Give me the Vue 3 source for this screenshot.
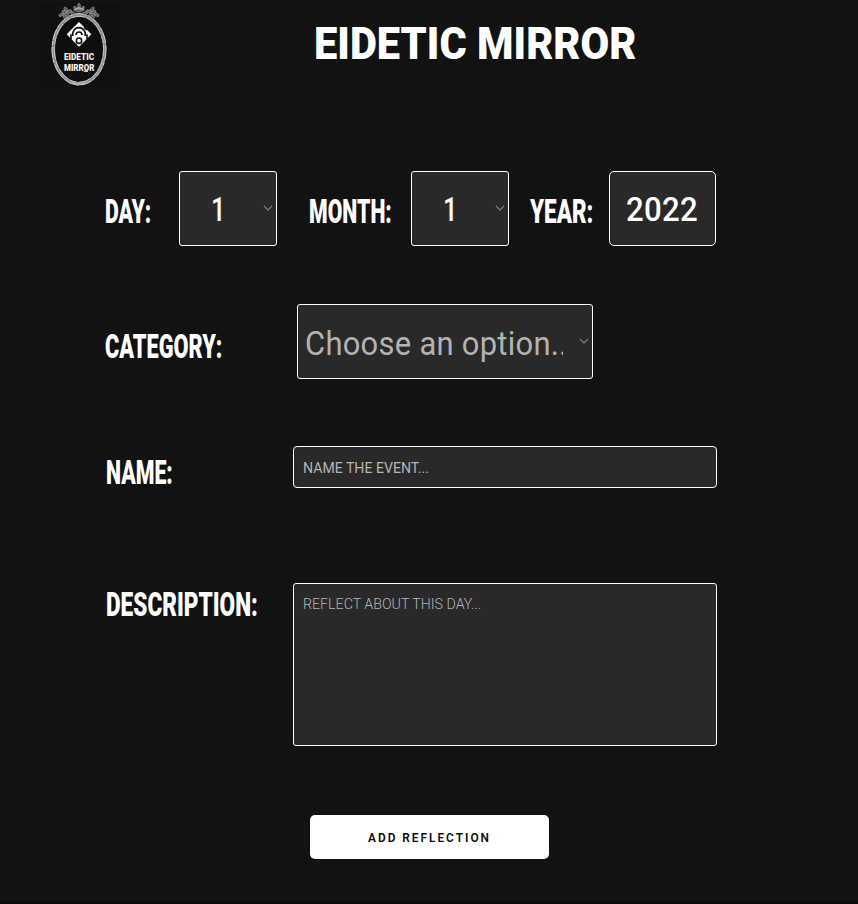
<script setup>
// Stretches a line of text horizontally to the given width.
const vFit = {
  mounted(el, { value }) {
    el.style.transform = `scaleX(${value / el.offsetWidth})`
  }
}
const petals = [
  [94, 44, -30], [104, 36, 20], [112, 44, 60], [118, 34, -15], [128, 39, 10], [137, 26, 50], [147, 18, 90],
  [157, 26, -50], [166, 39, -10], [176, 34, 15], [182, 44, -60], [190, 36, -20], [200, 44, 30],
  [104, 50, 60], [190, 50, -60], [147, 32, 0], [108, 28, 45], [186, 28, -45]
]
</script>

<template>
  <div class="page">
    <header class="header">
      <svg class="logo" viewBox="0 0 300 285" aria-label="Eidetic Mirror">
        <rect x="30" y="10" width="240" height="255" fill="#101010" />
        <ellipse cx="147" cy="148" rx="77" ry="103" fill="#0e0e0e" stroke="#8d8d8d" stroke-width="10" />
        <ellipse cx="147" cy="148" rx="81" ry="107" fill="none" stroke="#d2d2d2" stroke-width="3" stroke-dasharray="34 5 12 3" />
        <ellipse cx="147" cy="148" rx="74" ry="99" fill="none" stroke="#c4c4c4" stroke-width="3" stroke-dasharray="22 4 40 6" />
        <g fill="#555" stroke="#a5a5a5" stroke-width="2">
          <ellipse v-for="(p, i) in petals" :key="i" :cx="p[0]" :cy="p[1]" rx="8" ry="4"
            :transform="`rotate(${p[2]} ${p[0]} ${p[1]})`" />
        </g>
        <path d="M132 31q15-15 30 0M127 247l12 5h16l12-5" fill="none" stroke="#b9b9b9" stroke-width="4" />
        <path d="M147 66L184 103L147 140L110 103Z" fill="#fff" />
        <g fill="none" stroke="#111" stroke-width="5">
          <path d="M129 108a19 19 0 1 1 36 0" />
          <path d="M138 105a9 9 0 1 1 18 0" />
          <circle cx="147" cy="122" r="8" />
          <path d="M123 103v14M171 103v14M163 82l8 8" />
        </g>
        <text x="102" y="179" textLength="90" lengthAdjust="spacingAndGlyphs" class="logo-text">EIDETIC</text>
        <text x="102" y="213" textLength="91" lengthAdjust="spacingAndGlyphs" class="logo-text">MIRROR</text>
        <path d="M161 214h13" stroke="#eee" stroke-width="3" />
      </svg>
      <h1 class="title"><span v-fit="322" class="fit">EIDETIC MIRROR</span></h1>
    </header>

    <main class="form">
      <div class="row date-row">
        <div class="label day"><span v-fit="46.5" class="fit">DAY:</span></div>
        <div class="box select number">
          <span class="one"><span v-fit="15" class="value fit">1</span></span>
          <svg class="chevron" viewBox="0 0 10 6"><path d="M1 1l4 4 4-4" /></svg>
        </div>
        <div class="label month"><span v-fit="82.5" class="fit">MONTH:</span></div>
        <div class="box select number">
          <span class="one"><span v-fit="15" class="value fit">1</span></span>
          <svg class="chevron" viewBox="0 0 10 6"><path d="M1 1l4 4 4-4" /></svg>
        </div>
        <div class="label year"><span v-fit="63.5" class="fit">YEAR:</span></div>
        <div class="box year-box"><span v-fit="72" class="value fit">2022</span></div>
      </div>

      <div class="row category-row">
        <div class="label wide"><span v-fit="117" class="fit">CATEGORY:</span></div>
        <div class="box select category">
          <div class="clip"><span v-fit="271" class="value fit muted">Choose an option...</span></div>
          <svg class="chevron" viewBox="0 0 10 6"><path d="M1 1l4 4 4-4" /></svg>
        </div>
      </div>

      <div class="row name-row">
        <div class="label side"><span v-fit="67" class="fit">NAME:</span></div>
        <div class="box name-box"><span v-fit="126" class="hint fit">NAME THE EVENT...</span></div>
      </div>

      <div class="row desc-row">
        <div class="label side"><span v-fit="151.5" class="fit">DESCRIPTION:</span></div>
        <div class="box desc-box"><span v-fit="178" class="hint light fit">REFLECT ABOUT THIS DAY...</span></div>
      </div>

      <button class="submit" type="button"><span v-fit="123" class="fit">ADD REFLECTION</span></button>
    </main>
  </div>
</template>

<style>
body { background: #121212; overflow: hidden; }
</style>

<style scoped>
.page {
  box-sizing: border-box;
  height: 904px;
  background: #121212;
  border-top: 2px solid #12121b;
  border-bottom: 2px solid #0d0a0d;
  font-family: Roboto, "Liberation Sans", sans-serif;
  color: #fff;
}
.fit { display: inline-block; white-space: nowrap; transform-origin: 0 50%; }
.header { display: flex; height: 169px; padding-left: 30px; }
.logo { width: 100px; height: 95px; margin-top: -2px; flex: none; }
.logo-text { font: 900 26px Roboto, sans-serif; fill: #f4f4f4; }
.title { margin: 12px 0 0 184px; height: 60px; font-size: 45px; line-height: 60px; font-weight: 900; }
.form { display: flex; flex-direction: column; align-items: flex-start; }
.row { display: flex; align-items: flex-start; }
.box {
  box-sizing: border-box;
  flex: none;
  background: #292929;
  border: 1px solid #fff;
  border-radius: 3px;
}
.label { flex: none; height: 38px; font-size: 32.5px; line-height: 38px; font-weight: 900; }
.date-row { height: 75px; margin-left: 105px; }
.date-row .label { margin-top: 22px; }
.day { width: 74px; }
.month { width: 102px; margin-left: 32px; }
.year { width: 79px; margin-left: 21px; }
.select { display: flex; align-items: center; height: 75px; }
.number { width: 98px; justify-content: space-between; padding: 0 3px 0 31px; }
.value { font-size: 32.5px; line-height: 38px; font-weight: 500; letter-spacing: 0.3px; margin-top: 2px; }
.one { width: 18px; }
.chevron { width: 10px; height: 6px; flex: none; fill: none; stroke: #777; stroke-width: 1.4; margin-bottom: 1px; }
.year-box { display: flex; align-items: center; width: 107px; height: 75px; padding-left: 16px; border-radius: 5px; }
.category-row { margin: 58px 0 0 105px; }
.category-row .label { margin-top: 24px; }
.wide { width: 192px; }
.category { width: 296px; justify-content: space-between; padding: 0 3px 0 7px; }
.clip { width: 258px; height: 42px; margin-top: 4px; overflow: hidden; }
.muted { color: #b3b3b3; font-weight: 400; }
.name-row { height: 42px; margin: 67px 0 0 106px; }
.name-row .label { margin-top: 8px; }
.side { width: 187px; }
.name-box { display: flex; align-items: center; width: 424px; height: 42px; padding: 1px 0 0 9px; border-radius: 4px; }
.hint { font-size: 15px; line-height: 20px; color: #b5b5b5; }
.light { font-weight: 300; }
.desc-row { margin: 95px 0 0 106px; }
.desc-row .label { margin-top: 3px; }
.desc-box { width: 424px; height: 163px; padding: 10px 0 0 9px; }
.submit {
  width: 239px;
  height: 44px;
  margin: 69px 0 0 310px;
  padding: 1px 0 0 58px;
  border: 0;
  border-radius: 5px;
  background: #fff;
  color: #0a0a0a;
  text-align: left;
  font: 600 13px Roboto, sans-serif;
  letter-spacing: 2.2px;
}
</style>
